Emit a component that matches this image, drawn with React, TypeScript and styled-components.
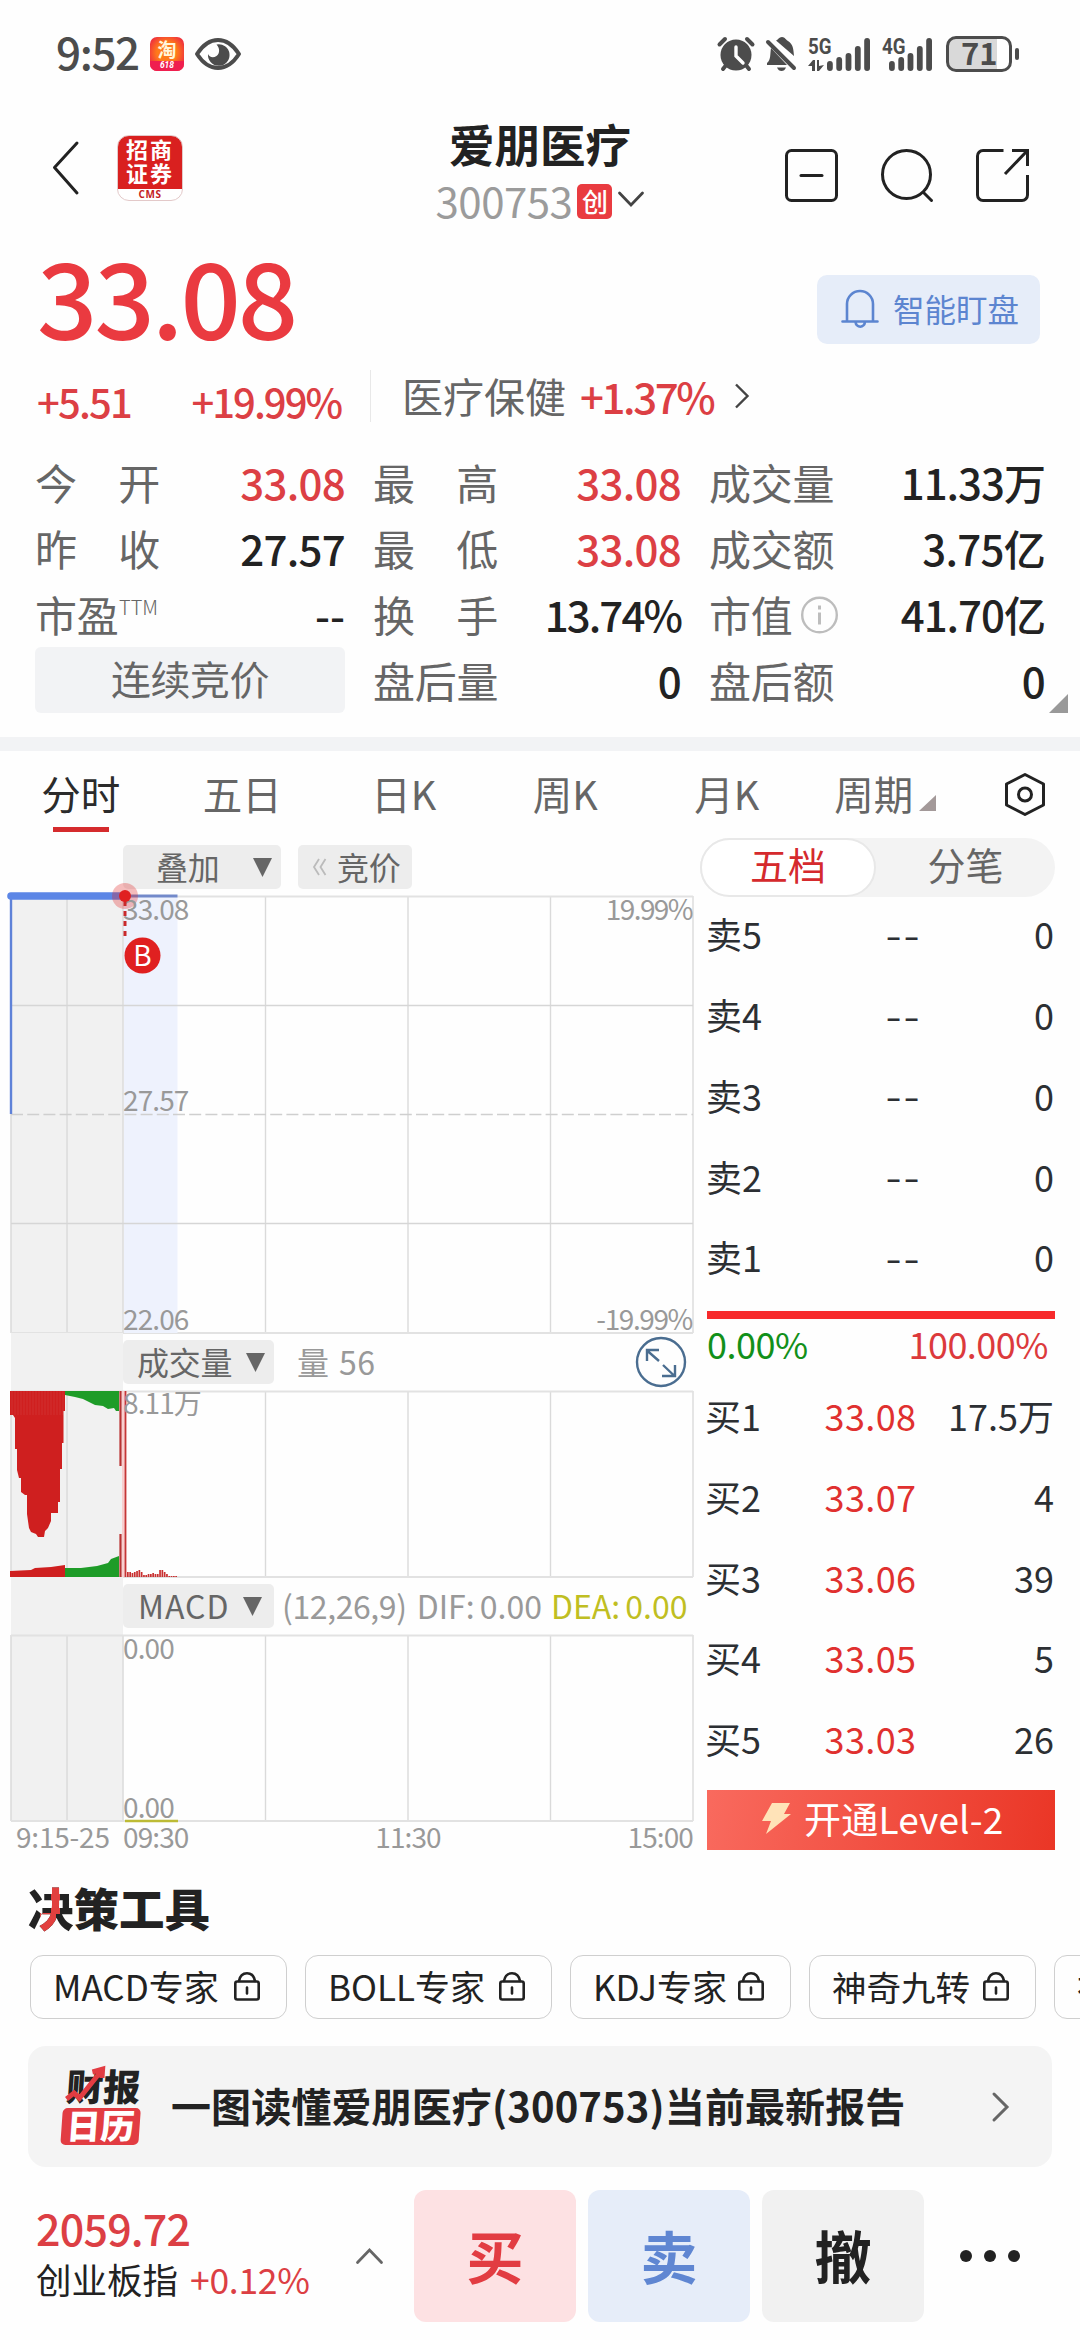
import React from "react";
import styled, { createGlobalStyle } from "styled-components";

const FONT = '"Noto Sans CJK SC", "Noto Sans", sans-serif';
const RED = "#dc3f44";
const INK = "#222222";
const GREY = "#666666";
const MUTED = "#999999";

const Global = createGlobalStyle`
  *, *::before, *::after { box-sizing: border-box; }
  html, body { margin: 0; padding: 0; background: #fff; }
  body { font-family: ${FONT}; color: ${INK}; }
  svg { display: block; flex: none; overflow: visible; }
`;

const Page = styled.main`
  width: 1080px;
  height: 2340px;
  overflow: hidden;
  display: flex;
  flex-direction: column;
  background: #fefefe;
`;

const T = styled.span<{ $size: number; $color?: string; $weight?: number; $ls?: number }>`
  font-size: ${(p) => p.$size}px;
  line-height: ${(p) => Math.round(p.$size * 1.3)}px;
  color: ${(p) => p.$color ?? INK};
  font-weight: ${(p) => p.$weight ?? 400};
  letter-spacing: ${(p) => p.$ls ?? 0}px;
  white-space: nowrap;
`;

/* ---------- status bar ---------- */
const StatusBar = styled.header`
  flex: none;
  height: 108px;
  padding: 0 61px 0 56px;
  display: flex;
  align-items: center;
  justify-content: space-between;
`;
const StatusGroup = styled.div`
  display: flex;
  align-items: center;
`;
const Clock = styled.div`
  width: 94px;
  margin-top: -6px;
  font-size: 44px;
  line-height: 58px;
  font-weight: 500;
  letter-spacing: -1.4px;
  color: #4c4c4c;
`;
const TaoIcon = styled.div`
  width: 34px;
  height: 34px;
  border-radius: 7px;
  overflow: hidden;
  display: flex;
  flex-direction: column;
  align-items: center;
  background: radial-gradient(circle at 50% 45%, #ff7a1a 0 40%, #f0343c 75%);
  color: #fff6dc;
  font-size: 19px;
  line-height: 24px;
  font-weight: 700;
`;
const TaoFoot = styled.div`
  width: 34px;
  height: 10px;
  background: #ef1f4f;
  color: #fff;
  font-size: 8.5px;
  line-height: 9px;
  font-family: Roboto, sans-serif;
  font-style: italic;
  text-align: center;
`;
const EyeIcon = styled.svg`
  margin-left: 11px;
`;
const MutedBell = styled.svg`
  margin: 0 12px;
`;
const Battery = styled.div`
  width: 66px;
  height: 36px;
  margin-left: 1px;
  border: 3px solid #4c4c4c;
  border-radius: 10px;
  background: linear-gradient(90deg, #d9d9d9 0 48px, #fff 48px);
  color: #4c4c4c;
  font-size: 31px;
  line-height: 26px;
  font-weight: 700;
  padding-left: 12px;
`;
const Nub = styled.div`
  width: 4px;
  height: 12px;
  margin-left: 3px;
  border-radius: 2px;
  background: #4c4c4c;
`;

const bars = [10, 14, 18, 25, 33];
const Signal = ({ label, arrows }: { label: string; arrows?: boolean }) => (
  <svg width="63" height="34" viewBox="0 0 63 34" fill="#4c4c4c">
    <text x="0" y="17" fontFamily="Roboto" fontWeight="700" fontSize="22.5" textLength="23.5" lengthAdjust="spacingAndGlyphs">
      {label}
    </text>
    {arrows && <path d="M0 29l5-6h2v11H4v-5zM9 23h2v6l5-1-5 6H9z" />}
    {bars.slice(0).map((h, i) => (
      <rect key={i} x={(arrows ? 19 : 7) + i * 9.3} y={34 - h} width="5.8" height={h} rx="2.9" />
    ))}
  </svg>
);

/* ---------- title bar ---------- */
const TitleBar = styled.nav`
  flex: none;
  height: 130px;
  display: grid;
  grid-template-columns: 350px 1fr 350px;
`;
const NavLeft = styled.div`
  display: flex;
  align-items: center;
  gap: 38px;
  padding: 0 0 10px 53px;
`;
const BrokerLogo = styled.div`
  width: 66px;
  height: 66px;
  border-radius: 12px;
  overflow: hidden;
  border: 1px solid #e3c9c9;
  background: linear-gradient(#d9201f 0 53px, #fff 53px);
  color: #fff;
  text-align: center;
  font-size: 22px;
  line-height: 24px;
  font-weight: 700;
  letter-spacing: 2px;
`;
const BrokerCode = styled.div`
  margin-top: 5px;
  font-size: 10px;
  line-height: 11px;
  letter-spacing: 0.5px;
  color: #c4221f;
  font-family: "Open Sans", sans-serif;
`;
const NavCenter = styled.div`
  display: flex;
  flex-direction: column;
  align-items: center;
  padding-top: 6px;
`;
const CodeRow = styled.div`
  display: flex;
  align-items: center;
  height: 54px;
  margin-top: 2px;
  padding-bottom: 6px;
`;
const Board = styled.span`
  width: 35px;
  height: 35px;
  margin: 4px 6px 0 5px;
  border-radius: 5px;
  background: #e93b40;
  color: #fff;
  font-size: 26px;
  line-height: 33px;
  text-align: center;
  font-weight: 500;
`;
const NavRight = styled.div`
  display: flex;
  align-items: center;
  justify-content: flex-end;
  gap: 43px;
  padding: 5px 51px 0 0;
`;

/* ---------- quote ---------- */
const PriceRow = styled.section`
  flex: none;
  height: 112px;
  padding: 0 40px 0 37px;
  display: flex;
  justify-content: space-between;
`;
const Price = styled.div`
  font-size: 106px;
  line-height: 112px;
  font-weight: 500;
  letter-spacing: -3px;
  color: #ea3a40;
`;
const WatchButton = styled.button`
  width: 223px;
  height: 69px;
  margin-top: 37px;
  padding: 0 0 3px 24px;
  border: 0;
  border-radius: 10px;
  background: #e6edf9;
  display: flex;
  align-items: center;
  gap: 14px;
  font-family: inherit;
  svg { margin-top: 3px; }
`;
const ChangeRow = styled.section`
  flex: none;
  height: 91px;
  display: flex;
  align-items: center;
  padding-left: 37px;
`;
const Changes = styled.div`
  width: 304px;
  display: flex;
  justify-content: space-between;
  padding-top: 10px;
`;
const Divider = styled.div`
  width: 1px;
  height: 52px;
  margin: 0 31px 0 29px;
  background: #e8e8e8;
`;
const Sector = styled.div`
  display: flex;
  align-items: center;
  gap: 14px;
`;
const SectorArrow = styled.svg`
  margin-left: 8px;
`;
const Stats = styled.section`
  position: relative;
  flex: none;
  height: 296px;
  padding-left: 35px;
  display: grid;
  grid-template-columns: 310px 308px 336px;
  grid-template-rows: repeat(4, 66px);
  column-gap: 28px;
  padding-top: 8px;
`;
const Stat = styled.div`
  display: flex;
  justify-content: space-between;
  align-items: center;
`;
const StatLabel = styled.div`
  width: 125px;
  display: flex;
  justify-content: space-between;
  align-items: center;
  font-size: 42px;
  line-height: 66px;
  letter-spacing: -0.3px;
  color: ${GREY};
  white-space: nowrap;
`;
const TTM = styled.sup`
  font-size: 20px;
  line-height: 20px;
  letter-spacing: 0;
  margin: -14px 0 0 0;
  width: 41px;
  font-weight: 300;
  vertical-align: baseline;
`;
const StatValue = styled.div<{ $up?: boolean; $ls?: number }>`
  font-size: 42px;
  line-height: 66px;
  font-weight: 500;
  letter-spacing: ${(p) => p.$ls ?? -0.7}px;
  color: ${(p) => (p.$up ? RED : INK)};
  white-space: nowrap;
`;
const Phase = styled.div`
  height: 66px;
  border-radius: 6px;
  background: #f2f3f5;
  text-align: center;
  font-size: 40px;
  line-height: 63px;
  letter-spacing: -0.5px;
  color: ${GREY};
`;
const Corner = styled.i`
  position: absolute;
  right: 12px;
  bottom: 24px;
  border-left: 19px solid transparent;
  border-bottom: 19px solid #999;
`;
const Gap = styled.div`
  flex: none;
  height: 14px;
  background: #f2f3f5;
`;

/* ---------- tabs ---------- */
const Tabs = styled.nav`
  flex: none;
  height: 87px;
  display: grid;
  grid-template-columns: repeat(6, 161.5px) 1fr;
`;
const Tab = styled.div<{ $on?: boolean }>`
  display: flex;
  flex-direction: column;
  align-items: center;
  font-size: 39.5px;
  line-height: 60px;
  padding-top: 12px;
  color: ${(p) => (p.$on ? "#2b2b2b" : GREY)};
  &::after {
    content: "";
    width: 56px;
    height: 5px;
    margin-top: 4px;
    background: ${(p) => (p.$on ? "#d52b2d" : "transparent")};
  }
`;
const PeriodTab = styled.span`
  display: flex;
  align-items: flex-end;
  gap: 6px;
  margin-right: 6px;
  svg { margin-bottom: 12px; }
`;
const Gear = styled.div`
  display: flex;
  justify-content: center;
  padding-top: 22px;
`;

/* ---------- market body ---------- */
const Body = styled.section`
  flex: none;
  height: 1020px;
  display: grid;
  grid-template-columns: 693px 355px;
  column-gap: 7px;
`;
const Charts = styled.div`
  padding-left: 11px;
  display: flex;
  flex-direction: column;
`;
const OverlayBar = styled.div`
  flex: none;
  height: 58px;
  padding: 7px 0 0 112px;
  display: flex;
  gap: 17px;
`;
const Pill = styled.div<{ $w: number; $pad: number; $gap: number }>`
  width: ${(p) => p.$w}px;
  height: 44px;
  padding-left: ${(p) => p.$pad}px;
  display: flex;
  align-items: center;
  gap: ${(p) => p.$gap}px;
  border-radius: 5px;
  background: #ededed;
  font-size: 32px;
  line-height: 40px;
  color: ${GREY};
  white-space: nowrap;
`;
const Label = styled.span<{ $ls?: number }>`
  margin-top: -3px;
  letter-spacing: ${(p) => p.$ls ?? -0.3}px;
`;
const PanelHead = styled.div`
  flex: none;
  height: 58px;
  padding-left: 112px;
  display: flex;
  align-items: center;
  background: linear-gradient(90deg, #f1f1f1 0 112px, transparent 112px);
`;
const HeadText = styled.span<{ $ml: number; $color?: string; $ls?: number; $ws?: number }>`
  margin: -2px 0 0 ${(p) => p.$ml}px;
  font-size: 32px;
  line-height: 40px;
  letter-spacing: ${(p) => p.$ls ?? 0}px;
  word-spacing: ${(p) => p.$ws ?? -2}px;
  color: ${(p) => p.$color ?? MUTED};
  white-space: nowrap;
`;
const Expand = styled.div`
  margin-left: auto;
  margin-right: 7px;
`;
const Axis = styled.div`
  display: grid;
  grid-template-columns: 112px 1fr 1fr 1fr;
  font-size: 28px;
  line-height: 30px;
  letter-spacing: -0.9px;
  color: ${MUTED};
`;
const Tick = styled.span<{ $align?: string; $auction?: boolean }>`
  text-align: ${(p) => p.$align ?? "left"};
  padding-left: ${(p) => (p.$auction ? 5 : 0)}px;
  letter-spacing: ${(p) => (p.$auction ? "-0.2px" : "inherit")};
  white-space: nowrap;
`;

/* ---------- order book ---------- */
const Book = styled.aside`
  display: flex;
  flex-direction: column;
`;
const Toggle = styled.div`
  flex: none;
  height: 59px;
  display: flex;
  border-radius: 30px;
  background: #f3f3f3;
`;
const Segment = styled.div<{ $on?: boolean }>`
  flex: ${(p) => (p.$on ? "0 0 176px" : 1)};
  border-radius: 30px;
  text-align: center;
  font-size: 38px;
  line-height: ${(p) => (p.$on ? 48 : 52)}px;
  border: ${(p) => (p.$on ? "2px solid #e8e8e8" : "0")};
  background: ${(p) => (p.$on ? "#fff" : "transparent")};
  color: ${(p) => (p.$on ? "#d52a2d" : GREY)};
`;
const Side = styled.div<{ $top: number; $inset: number }>`
  flex: none;
  margin-top: ${(p) => p.$top}px;
  padding: 0 1px 0 ${(p) => p.$inset}px;
  display: flex;
  flex-direction: column;
`;
const Level = styled.div`
  height: 80.75px;
  display: grid;
  grid-template-columns: 90px 151px 1fr;
  align-items: center;
  font-size: 36px;
  line-height: 48px;
  color: #2c2f33;
  white-space: nowrap;
  span:nth-child(2) { text-align: center; }
  span:nth-child(3) { text-align: right; }
`;
const Bid = styled.span`
  color: #e0302f;
  letter-spacing: 0.4px;
`;
const Dashes = styled.span`
  font-size: 48px;
  line-height: 48px;
  letter-spacing: 2px;
  padding-left: 64px;
  font-weight: 300;
  margin-top: -5px;
`;
const RatioBar = styled.div`
  flex: none;
  height: 8px;
  margin: 14px 0 0 7px;
  background: #f72a2c;
`;
const Ratio = styled.div`
  flex: none;
  display: flex;
  justify-content: space-between;
  padding: 0 7px 0 7px;
  margin-top: 1px;
`;
const LevelTwo = styled.div`
  height: 60px;
  margin: 11px 0 0 7px;
  padding: 0 0 3px 55px;
  display: flex;
  align-items: center;
  gap: 13px;
  background: linear-gradient(100deg, #f96a5e, #ea3626);
`;

/* ---------- tools ---------- */
const ToolsTitle = styled.h2`
  flex: none;
  margin: 0;
  height: 97px;
  padding: 19px 0 0 28px;
  font-size: 45.5px;
  line-height: 60px;
  font-weight: 900;
  color: ${INK};
`;
const RedStroke = styled.span`
  background:
    linear-gradient(#e2403f, #e2403f) 23px 0 / 9px 40px no-repeat,
    linear-gradient(#e2403f, #e2403f) 12px 39px / 16px 27px no-repeat,
    ${INK};
  background-clip: text;
  -webkit-background-clip: text;
  color: transparent;
`;
const Chips = styled.div`
  flex: none;
  display: flex;
  gap: 18px;
  padding-left: 30px;
  height: 64px;
`;
const Chip = styled.div<{ $w: number }>`
  flex: 0 0 ${(p) => p.$w}px;
  height: 64px;
  padding: 0 26px 2px 22px;
  border: 1.5px solid #cfcfcf;
  border-radius: 13px;
  display: flex;
  align-items: center;
  justify-content: space-between;
  overflow: hidden;
`;
const Banner = styled.div`
  flex: none;
  height: 121px;
  margin: 27px 28px 0;
  padding: 0 43px 0 35px;
  border-radius: 18px;
  background: #f4f4f4;
  display: flex;
  align-items: center;
`;
const ReportLogo = styled.div`
  width: 78px;
  display: flex;
  flex-direction: column;
  transform: skewX(-4deg);
`;
const ReportTop = styled.div`
  position: relative;
  height: 38px;
  text-align: center;
  font-size: 37px;
  line-height: 34px;
  font-weight: 900;
  svg { position: absolute; left: 3px; top: -1px; }
`;
const ReportBottom = styled.div`
  height: 37px;
  margin-top: 2px;
  border-radius: 5px;
  background: #e23c42;
  color: #fff;
  text-align: center;
  font-size: 34px;
  line-height: 34px;
  font-weight: 900;
`;
const BannerText = styled.div`
  flex: 1;
  margin: -4px 0 0 30px;
  font-size: 40px;
  line-height: 56px;
  letter-spacing: 0.12px;
  font-weight: 700;
  white-space: nowrap;
`;

/* ---------- trade bar ---------- */
const TradeBar = styled.footer`
  flex: none;
  height: 132px;
  margin-top: 23px;
  padding-left: 36px;
  display: flex;
  align-items: center;
`;
const Index = styled.div`
  width: 320px;
  display: flex;
  flex-direction: column;
  gap: 1px;
  padding-bottom: 12px;
`;
const IndexLine = styled.div`
  display: flex;
  gap: 12px;
`;
const UpChevron = styled.svg`
  margin-right: 31px;
`;
const Trade = styled.div<{ $bg: string; $color: string }>`
  width: 162px;
  height: 132px;
  margin-right: 12px;
  border-radius: 12px;
  background: ${(p) => p.$bg};
  color: ${(p) => p.$color};
  text-align: center;
  font-size: 57px;
  line-height: 129px;
  font-weight: 700;
`;
const MoreDots = styled.svg`
  margin-left: 23px;
`;

const Caret = () => (
  <svg width="19" height="19" viewBox="0 0 19 19">
    <path d="M0 0h19L9.5 19z" fill="#666" />
  </svg>
);
const Lock = () => (
  <svg width="26" height="29" viewBox="0 0 26 29" fill="none" stroke={INK} strokeWidth="2.6" strokeLinecap="round">
    <rect x="1.3" y="9.5" width="23.4" height="18" rx="2" />
    <path d="M5 9C6 3.500 9.500 1.300 13 1.300S20 3.500 21 9M13 15.500v6" />
  </svg>
);

const GRID = "#e2e2e2";
const cols = [254.5, 397, 539.5, 682];
const chartText = { fontFamily: FONT, fontSize: 28, fill: MUTED, letterSpacing: -0.9 };

const Grid = ({ h }: { h: number }) => (
  <g>
    <rect x="0" y="0" width="112" height={h} fill="#f1f1f1" />
    <path d={`M0 0V${h}M56 0V${h}M112 0V${h}`} stroke="#dcdcdc" strokeWidth="1.6" />
    <path d={cols.map((x) => `M${x} 0V${h}`).join("")} stroke="#dadada" strokeWidth="1.4" />
    <path d={`M0 0.500H682M0 ${h}H682`} stroke={GRID} strokeWidth="1.8" />
  </g>
);

const PriceChart = () => (
  <svg width="682" height="437" viewBox="0 0 682 437">
    <Grid h={437} />
    <rect x="113" y="1" width="53.500" height="436" fill="#eef2fd" />
    <path d="M0 109.500H682M0 327.500H682" stroke="#d6d6d6" strokeWidth="1.4" />
    <path d="M0 218.500H682" stroke="#cfcfcf" strokeWidth="1.6" strokeDasharray="12 4.200" />
    <path d="M0 0V218" stroke="#5f82d8" strokeWidth="2.400" />
    <path d="M0 0H114" stroke="#5c86e6" strokeWidth="7.600" strokeLinecap="round" />
    <path d="M114 0H166.500" stroke="#7289ca" strokeWidth="3" />
    <circle cx="114" cy="0" r="13" fill="#e02020" fillOpacity="0.3" />
    <text x="112" y="24" {...chartText}>33.08</text>
    <path d="M114 5V45" stroke="#c92a2c" strokeWidth="3" strokeDasharray="5 5" />
    <circle cx="114" cy="0" r="6" fill="#e02020" />
    <circle cx="131.500" cy="59.500" r="18" fill="#e02020" />
    <text x="131.500" y="69.500" textAnchor="middle" fontFamily={FONT} fontSize="28" fill="#fff">B</text>
    <text x="681" y="24" textAnchor="end" {...chartText} letterSpacing={-1.6}>19.99%</text>
    <text x="112" y="215" {...chartText}>27.57</text>
    <text x="112" y="434" {...chartText}>22.06</text>
    <text x="681" y="434" textAnchor="end" {...chartText} letterSpacing={-1.4}>-19.99%</text>
  </svg>
);

const ticks = [5, 5, 4, 5, 6, 7, 5, 2, 2, 3, 3, 4, 3, 3, 7, 7, 5, 3, 1, 1, 1, 1];
const VolumeChart = () => (
  <svg width="682" height="186" viewBox="0 0 682 186">
    <Grid h={186} />
    <path
      d="M-1 0V24H2L4 27V58H6V79L8 87H10V101L14 104H16V123L18 137L20 141L25 143L27 146H33L34 140L37 137L40 130V122H47V111H49V78H51V52H52.500V20H54V0z"
      fill="#cf1f1f"
    />
    <path d="M54 0V4L64 6L72 8L80 12L84 14L92 15L97 18L103 17L105 20L108 20V0z" fill="#1e9c28" />
    <path d="M-1 186V180L20 179L24 177L40 176L54 174V186z" fill="#cf1f1f" />
    <path d="M54 186V177H70L86 175L97 172L100 168L108 165V186z" fill="#1e9c28" />
    <path
      d={Array.from({ length: 18 }, (_, i) => `M${1 + i * 3} 0V24`).join("")}
      stroke="#ffffff"
      strokeOpacity="0.08"
      strokeWidth="1"
    />
    <path d="M109.500 0V75M109.500 143V186" stroke="#b93232" strokeWidth="2.200" />
    <rect x="111" y="0" width="3" height="186" fill="#f8cfcf" />
    <path d="M114.500 0V186" stroke="#c53636" strokeWidth="1.800" />
    {ticks.map((h, i) => (
      <rect key={i} x={116 + i * 2.3} y={186 - h} width="1.700" height={h} fill="#c93030" />
    ))}
    <text x="112" y="23" {...chartText}>8.11万</text>
  </svg>
);

const MacdChart = () => (
  <svg width="682" height="186" viewBox="0 0 682 186">
    <Grid h={186} />
    <text x="112" y="24" {...chartText}>0.00</text>
    <text x="112" y="183" {...chartText}>0.00</text>
    <path d="M114 186H167" stroke="#bdbb35" strokeWidth="2.400" />
  </svg>
);

const asks = ["5", "4", "3", "2", "1"];
const bids = [
  ["1", "33.08", "17.5万"],
  ["2", "33.07", "4"],
  ["3", "33.06", "39"],
  ["4", "33.05", "5"],
  ["5", "33.03", "26"],
];

const Pair = ({ a, b }: { a: string; b: string }) => (
  <StatLabel>
    <span>{a}</span>
    <span>{b}</span>
  </StatLabel>
);

export default function App() {
  return (
    <Page>
      <Global />
      <StatusBar>
        <StatusGroup>
          <Clock>9:52</Clock>
          <TaoIcon>
            淘<TaoFoot>618</TaoFoot>
          </TaoIcon>
          <EyeIcon width="46" height="32" viewBox="0 0 46 32">
            <path d="M2 16Q11 2 23 2T44 16Q35 30 23 30T2 16z" fill="none" stroke="#4c4c4c" strokeWidth="4" strokeLinejoin="round" />
            <path d="M21.500 6.500A10.800 10.800 0 1 1 13 16c1 3 5 4.500 8.500 2 3.500-2.500 3.500-8 0-11.500z" fill="#4c4c4c" />
          </EyeIcon>
        </StatusGroup>
        <StatusGroup>
          <svg width="36" height="34" viewBox="0 0 36 34" fill="#4c4c4c">
            <path d="M1.500 7.500L7 2M34.500 7.500L29 2M5 32l4-5M31 32l-4-5" stroke="#4c4c4c" strokeWidth="4" strokeLinecap="round" />
            <circle cx="18" cy="18" r="15.500" />
            <path d="M18 10v9l7 7" fill="none" stroke="#fff" strokeWidth="3.400" strokeLinecap="round" />
          </svg>
          <MutedBell width="30" height="34" viewBox="0 0 30 34" fill="#4c4c4c">
            <path d="M10 3.500C12 3 13 0 16 0s4 3 6 4c5 3 5.500 8 6 15zM5 11L21 28H1v-2c4-3 3-9 4-15zM11 30.500h9c-1 2.500-2.500 3.500-4.500 3.500S12 33 11 30.500z" />
            <path d="M2 5l26 26" stroke="#4c4c4c" strokeWidth="4" strokeLinecap="round" />
          </MutedBell>
          <Signal label="5G" arrows />
          <svg width="11" height="2" />
          <Signal label="4G" />
          <Battery>71</Battery>
          <Nub />
        </StatusGroup>
      </StatusBar>

      <TitleBar>
        <NavLeft>
          <svg width="26" height="54" viewBox="0 0 26 54" fill="none" stroke={INK} strokeWidth="3" strokeLinecap="round" strokeLinejoin="round">
            <path d="M24 2L1.500 26.500L24 52" />
          </svg>
          <BrokerLogo>
            招商
            <br />
            证券
            <BrokerCode>CMS</BrokerCode>
          </BrokerLogo>
        </NavLeft>
        <NavCenter>
          <T $size={45.5} $weight={700}>爱朋医疗</T>
          <CodeRow>
            <T $size={42} $color="#9b9b9b" $ls={-0.5}>300753</T>
            <Board>创</Board>
            <svg width="26" height="16" viewBox="0 0 26 16" fill="none" stroke="#444" strokeWidth="2.800" strokeLinecap="round">
              <path d="M1.500 2L13 14L24.500 2" />
            </svg>
          </CodeRow>
        </NavCenter>
        <NavRight>
          <svg width="53" height="53" viewBox="0 0 53 53" fill="none" stroke={INK} strokeWidth="3" strokeLinecap="round">
            <rect x="1.500" y="1.500" width="50" height="50" rx="5" />
            <path d="M16 26.500h21" />
          </svg>
          <svg width="52" height="53" viewBox="0 0 52 53" fill="none" stroke={INK} strokeWidth="3" strokeLinecap="round">
            <circle cx="25.500" cy="25.500" r="24" />
            <path d="M42.500 43.500l8 8" />
          </svg>
          <svg width="53" height="53" viewBox="0 0 53 53" fill="none" stroke={INK} strokeWidth="3">
            <path d="M27.500 1.500H7a5.500 5.500 0 0 0-5.500 5.500V46a5.500 5.500 0 0 0 5.500 5.500H46a5.500 5.500 0 0 0 5.500-5.500V26M36 1.500H51.500V17M51 2L29 25" />
          </svg>
        </NavRight>
      </TitleBar>

      <PriceRow>
        <Price>33.08</Price>
        <WatchButton>
          <svg width="38" height="40" viewBox="0 0 38 40" fill="none" stroke="#5c85d0" strokeWidth="2.600" strokeLinecap="round">
            <path d="M1.500 31.500h35M6 31V14a13 13 0 0 1 26 0V31M14.500 32a4.800 5.500 0 0 0 9.500 0" />
          </svg>
          <T $size={31.5} $color="#5c85d0">智能盯盘</T>
        </WatchButton>
      </PriceRow>
      <ChangeRow>
        <Changes>
          <T $size={40} $color={RED} $weight={500} $ls={-1.8}>+5.51</T>
          <T $size={40} $color={RED} $weight={500} $ls={-2}>+19.99%</T>
        </Changes>
        <Divider />
        <Sector>
          <T $size={41} $color={GREY}>医疗保健</T>
          <T $size={42} $color={RED} $weight={500} $ls={-2.4}>+1.37%</T>
          <SectorArrow width="14" height="26" viewBox="0 0 14 26" fill="none" stroke="#444" strokeWidth="2.400">
            <path d="M1 1.500L12.500 13L1 24.500" />
          </SectorArrow>
        </Sector>
      </ChangeRow>

      <Stats>
        <Stat><Pair a="今" b="开" /><StatValue $up>33.08</StatValue></Stat>
        <Stat><Pair a="最" b="高" /><StatValue $up>33.08</StatValue></Stat>
        <Stat><StatLabel>成交量</StatLabel><StatValue $ls={-1}>11.33万</StatValue></Stat>
        <Stat><Pair a="昨" b="收" /><StatValue>27.57</StatValue></Stat>
        <Stat><Pair a="最" b="低" /><StatValue $up>33.08</StatValue></Stat>
        <Stat><StatLabel>成交额</StatLabel><StatValue>3.75亿</StatValue></Stat>
        <Stat>
          <StatLabel>市盈<TTM>TTM</TTM></StatLabel>
          <StatValue $ls={0}>--</StatValue>
        </Stat>
        <Stat><Pair a="换" b="手" /><StatValue $ls={-1.9}>13.74%</StatValue></Stat>
        <Stat>
          <StatLabel>
            市值
            <svg width="37" height="37" viewBox="0 0 37 37" fill="none" stroke="#bdbdbd" strokeWidth="2.400">
              <circle cx="22.500" cy="19" r="17.300" />
              <path d="M22.500 16.500v12M22.500 9.500v4" strokeWidth="3" />
            </svg>
          </StatLabel>
          <StatValue $ls={-1}>41.70亿</StatValue>
        </Stat>
        <Phase>连续竞价</Phase>
        <Stat><StatLabel>盘后量</StatLabel><StatValue>0</StatValue></Stat>
        <Stat><StatLabel>盘后额</StatLabel><StatValue>0</StatValue></Stat>
        <Corner />
      </Stats>
      <Gap />

      <Tabs>
        <Tab $on>分时</Tab>
        <Tab>五日</Tab>
        <Tab>日K</Tab>
        <Tab>周K</Tab>
        <Tab>月K</Tab>
        <Tab>
          <PeriodTab>
            周期
            <svg width="17" height="16" viewBox="0 0 17 16"><path d="M17 0V16H0z" fill="#a39999" /></svg>
          </PeriodTab>
        </Tab>
        <Gear>
          <svg width="40" height="43" viewBox="0 0 40 43" fill="none" stroke={INK} strokeWidth="3" strokeLinejoin="round">
            <path d="M20 1.500L38.500 11V32L20 41.500L1.500 32V11z" />
            <circle cx="20" cy="21.500" r="6.500" />
          </svg>
        </Gear>
      </Tabs>

      <Body>
        <Charts>
          <OverlayBar>
            <Pill $w={158} $pad={33} $gap={34}><Label>叠加</Label><Caret /></Pill>
            <Pill $w={114} $pad={15} $gap={11}>
              <svg width="13" height="16" viewBox="0 0 13 16" fill="none" stroke="#bbb" strokeWidth="1.800">
                <path d="M6 0L1 8l5 8M12.500 0l-5 8l5 8" />
              </svg>
              <Label>竞价</Label>
            </Pill>
          </OverlayBar>
          <PriceChart />
          <PanelHead>
            <Pill $w={151} $pad={14} $gap={14}><Label>成交量</Label><Caret /></Pill>
            <HeadText $ml={23} $ls={0.4} $ws={2}>量 56</HeadText>
            <Expand>
              <svg width="50" height="50" viewBox="0 0 50 50" fill="none" stroke="#4a6d90" strokeWidth="2.400">
                <circle cx="25" cy="25" r="24" />
                <path d="M23 24L11 13.500M11 24V13H23M27 28L38 38.500M39 28V39H26" />
              </svg>
            </Expand>
          </PanelHead>
          <VolumeChart />
          <PanelHead>
            <Pill $w={151} $pad={15} $gap={13}><Label $ls={1}>MACD</Label><Caret /></Pill>
            <HeadText $ml={8} $ls={-0.4}>(12,26,9)</HeadText>
            <HeadText $ml={10}>DIF: 0.00</HeadText>
            <HeadText $ml={9}>
              <T as="span" $size={32} $color="#c0be22">DEA: 0.00</T>
            </HeadText>
          </PanelHead>
          <MacdChart />
          <Axis>
            <Tick $auction>9:15-25</Tick>
            <Tick>09:30</Tick>
            <Tick $align="center">11:30</Tick>
            <Tick $align="right">15:00</Tick>
          </Axis>
        </Charts>

        <Book>
          <Toggle>
            <Segment $on>五档</Segment>
            <Segment>分笔</Segment>
          </Toggle>
          <Side $top={-4} $inset={6}>
            {asks.map((n) => (
              <Level key={n}>
                <span>卖{n}</span>
                <Dashes>--</Dashes>
                <span>0</span>
              </Level>
            ))}
          </Side>
          <RatioBar />
          <Ratio>
            <T $size={36} $color="#12901a" $ls={-0.5}>0.00%</T>
            <T $size={36} $color="#dc3a3c" $ls={-0.5}>100.00%</T>
          </Ratio>
          <Side $top={8} $inset={5}>
            {bids.map(([n, p, v]) => (
              <Level key={n}>
                <span>买{n}</span>
                <Bid>{p}</Bid>
                <span>{v}</span>
              </Level>
            ))}
          </Side>
          <LevelTwo>
            <svg width="29" height="31" viewBox="0 0 29 31">
              <path d="M10 0H28L22 11H29L4 31L9 18H0z" fill="#ffe3b8" />
            </svg>
            <T $size={37} $color="#fff" $ls={0.2}>开通Level-2</T>
          </LevelTwo>
        </Book>
      </Body>

      <ToolsTitle><RedStroke>决</RedStroke>策工具</ToolsTitle>
      <Chips>
        <Chip $w={257}><T $size={35}>MACD专家</T><Lock /></Chip>
        <Chip $w={247}><T $size={35}>BOLL专家</T><Lock /></Chip>
        <Chip $w={221}><T $size={35}>KDJ专家</T><Lock /></Chip>
        <Chip $w={227}><T $size={34.500}>神奇九转</T><Lock /></Chip>
        <Chip $w={227}><T $size={34.500}>神奇</T><Lock /></Chip>
      </Chips>
      <Banner>
        <ReportLogo>
          <ReportTop>
            财报
            <svg width="40" height="36" viewBox="0 0 40 36" fill="none" stroke="#e23c42" strokeWidth="5">
              <path d="M0 32L7 26L13 31L32 5M24 5L34 2L34 11" />
            </svg>
          </ReportTop>
          <ReportBottom>日历</ReportBottom>
        </ReportLogo>
        <BannerText>一图读懂爱朋医疗(300753)当前最新报告</BannerText>
        <svg width="17" height="30" viewBox="0 0 17 30" fill="none" stroke="#666" strokeWidth="3" strokeLinecap="round">
          <path d="M2 2L15 15L2 28" />
        </svg>
      </Banner>

      <TradeBar>
        <Index>
          <T $size={43} $color={RED} $weight={500} $ls={-0.8}>2059.72</T>
          <IndexLine>
            <T $size={35.5}>创业板指</T>
            <T $size={35.5} $color={RED} $ls={-0.3}>+0.12%</T>
          </IndexLine>
        </Index>
        <UpChevron width="27" height="16" viewBox="0 0 27 16" fill="none" stroke="#666" strokeWidth="2.800" strokeLinecap="round">
          <path d="M1.500 14.500L13.500 2L25.500 14.500" />
        </UpChevron>
        <Trade $bg="#fde1e3" $color="#e23c42">买</Trade>
        <Trade $bg="#e6edf9" $color="#5f86d2">卖</Trade>
        <Trade $bg="#f1f1f1" $color={INK}>撤</Trade>
        <MoreDots width="62" height="14" viewBox="0 0 62 14" fill={INK}>
          <circle cx="7" cy="7" r="6" />
          <circle cx="31" cy="7" r="6" />
          <circle cx="55" cy="7" r="6" />
        </MoreDots>
      </TradeBar>
    </Page>
  );
}
